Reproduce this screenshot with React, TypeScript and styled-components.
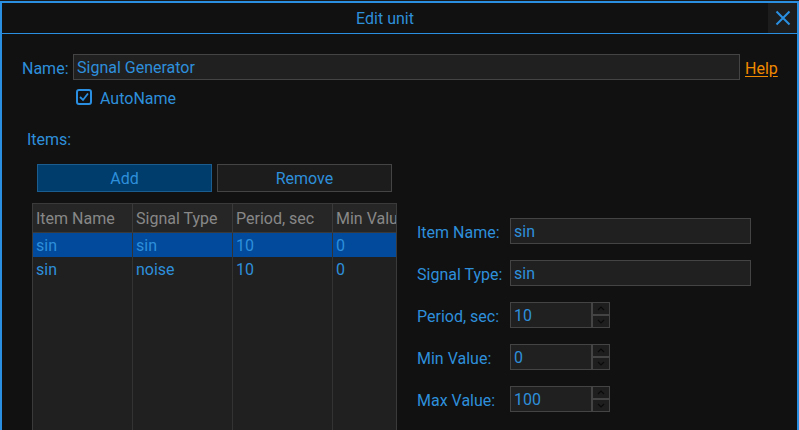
import React from "react";
import styled, { createGlobalStyle } from "styled-components";

const Global = createGlobalStyle`
  html, body { margin: 0; padding: 0; background: #1a1a1a; overflow: hidden; }
  body { font-family: Roboto, "Liberation Sans", sans-serif; }
`;

const BLUE = "#2e8fdb";

const Page = styled.div`
  width: 799px;
  height: 430px;
  padding-top: 1px;
  box-sizing: border-box;
  background: #1a1a1a;
  overflow: hidden;
`;

const Dialog = styled.div`
  width: 799px;
  height: 440px;
  box-sizing: border-box;
  border: 2px solid #2a8fe0;
  border-bottom: none;
  background: #111111;
  display: flex;
  flex-direction: column;
`;

const TitleBar = styled.div`
  height: 31px;
  flex: none;
  box-sizing: border-box;
  border-bottom: 1px solid #2a8fe0;
  display: flex;
  align-items: stretch;
  overflow: hidden;
`;

const Title = styled.div`
  flex: 1;
  box-sizing: border-box;
  text-align: center;
  padding-top: 1px;
  line-height: 29px;
  font-size: 16px;
  color: ${BLUE};
`;

const CloseButton = styled.div`
  width: 29px;
  background: #1d1d1d;
  display: flex;
  align-items: center;
  justify-content: center;
`;

const Content = styled.div`
  display: flex;
  flex-direction: column;
  padding: 20px 0 0 20px;
`;

const NameRow = styled.div`
  display: flex;
  align-items: center;
  height: 26px;
`;

const Label = styled.span<{ $w?: number }>`
  color: ${BLUE};
  font-size: 16px;
  padding-top: 2px;
  ${(p) => (p.$w ? `width: ${p.$w}px; flex: none;` : "")}
`;

const NameLabel = styled(Label)`
  width: 51px;
  flex: none;
`;

const TextBox = styled.div<{ $w: number }>`
  width: ${(p) => p.$w}px;
  height: 26px;
  box-sizing: border-box;
  border: 1px solid #444;
  background: #202020;
  color: ${BLUE};
  font-size: 16px;
  line-height: 26px;
  padding-left: 3px;
  flex: none;
`;

const HelpLink = styled.a`
  color: #f08a00;
  font-size: 16px;
  text-decoration: underline;
  text-underline-offset: 2px;
  margin-left: 5px;
  padding-top: 2px;
`;

const CheckRow = styled.div`
  display: flex;
  align-items: center;
  margin: 9px 0 0 54px;
  gap: 8px;
  height: 16px;
`;

const ItemsLabel = styled(Label)`
  margin: 24px 0 0 5px;
  line-height: 18px;
`;

const ButtonRow = styled.div`
  display: flex;
  gap: 5px;
  margin: 15px 0 0 15px;
`;

const Button = styled.div<{ $primary?: boolean }>`
  width: 175px;
  height: 28px;
  box-sizing: border-box;
  border: 1px solid ${(p) => (p.$primary ? "#1c5d8f" : "#444")};
  background: ${(p) => (p.$primary ? "#003c6c" : "#1c1c1c")};
  color: ${BLUE};
  font-size: 16px;
  display: flex;
  align-items: center;
  justify-content: center;
  padding-top: 1px;
`;

const Lower = styled.div`
  display: flex;
  margin: 11px 0 0 10px;
  gap: 20px;
`;

const Table = styled.div`
  width: 365px;
  height: 260px;
  box-sizing: border-box;
  border: 1px solid #3a3a3a;
  background: #202020;
  display: grid;
  grid-template-columns: 100px 100px 100px 63px;
  grid-template-rows: 29px 24px 24px 1fr;
  overflow: hidden;
  flex: none;
`;

const HeadCell = styled.div<{ $last?: boolean }>`
  background: #262626;
  border-right: ${(p) => (p.$last ? "none" : "1px solid #3a3a3a")};
  border-bottom: 1px solid #3a3a3a;
  color: #888;
  font-size: 16px;
  line-height: 30px;
  padding-left: 3px;
  white-space: nowrap;
  overflow: hidden;
`;

const Cell = styled.div<{ $sel?: boolean; $last?: boolean }>`
  background: ${(p) => (p.$sel ? "#014a9c" : "transparent")};
  border-right: ${(p) => (p.$last ? "none" : "1px solid #333")};
  color: ${BLUE};
  font-size: 16px;
  line-height: 26px;
  padding-left: 3px;
  white-space: nowrap;
  overflow: hidden;
`;

const Form = styled.div`
  display: flex;
  flex-direction: column;
  gap: 16px;
  padding-top: 15px;
`;

const FormRow = styled.div`
  display: flex;
  align-items: center;
  height: 26px;
`;

const Spin = styled.div`
  display: flex;
`;

const SpinButtons = styled.div`
  display: flex;
  flex-direction: column;
  height: 26px;
`;

const SpinButton = styled.div`
  width: 18px;
  height: 13px;
  box-sizing: border-box;
  border: 1px solid #444;
  background: #1e1e1e;
  display: flex;
  align-items: center;
  justify-content: center;
`;

const Chevron = ({ up }: { up?: boolean }) => (
  <svg width="8" height="5" viewBox="0 0 8 5">
    <path
      d={up ? "M1 4 L4 1 L7 4" : "M1 1 L4 4 L7 1"}
      fill="none"
      stroke="#0a0a0a"
      strokeWidth="1.2"
    />
  </svg>
);

const SpinBox = ({ value }: { value: string }) => (
  <Spin>
    <TextBox $w={82}>{value}</TextBox>
    <SpinButtons>
      <SpinButton>
        <Chevron up />
      </SpinButton>
      <SpinButton>
        <Chevron />
      </SpinButton>
    </SpinButtons>
  </Spin>
);

const rows = [
  ["sin", "sin", "10", "0"],
  ["sin", "noise", "10", "0"],
];

export default function App() {
  return (
    <Page>
      <Global />
      <Dialog>
        <TitleBar>
          <Title>Edit unit</Title>
          <CloseButton>
            <svg width="16" height="16" viewBox="0 0 16 16">
              <path d="M1.5 1.5 L14.5 14.5 M14.5 1.5 L1.5 14.5" stroke="#2a8fe0" strokeWidth="2" />
            </svg>
          </CloseButton>
        </TitleBar>
        <Content>
          <NameRow>
            <NameLabel>Name:</NameLabel>
            <TextBox $w={667}>Signal Generator</TextBox>
            <HelpLink>Help</HelpLink>
          </NameRow>
          <CheckRow>
            <svg width="16" height="16" viewBox="0 0 16 16">
              <rect x="1" y="1" width="14" height="14" rx="2" fill="none" stroke="#2a8fe0" strokeWidth="2" />
              <path d="M4 8 L7 11 L12 4.5" fill="none" stroke="#2a8fe0" strokeWidth="1.8" />
            </svg>
            <Label>AutoName</Label>
          </CheckRow>
          <ItemsLabel>Items:</ItemsLabel>
          <ButtonRow>
            <Button $primary>Add</Button>
            <Button>Remove</Button>
          </ButtonRow>
          <Lower>
            <Table>
              <HeadCell>Item Name</HeadCell>
              <HeadCell>Signal Type</HeadCell>
              <HeadCell>Period, sec</HeadCell>
              <HeadCell $last>Min Value</HeadCell>
              {rows.map((r, i) =>
                r.map((c, j) => (
                  <Cell key={`${i}-${j}`} $sel={i === 0} $last={j === 3}>
                    {c}
                  </Cell>
                ))
              )}
              <Cell />
              <Cell />
              <Cell />
              <Cell $last />
            </Table>
            <Form>
              <FormRow>
                <Label $w={93}>Item Name:</Label>
                <TextBox $w={241}>sin</TextBox>
              </FormRow>
              <FormRow>
                <Label $w={93}>Signal Type:</Label>
                <TextBox $w={241}>sin</TextBox>
              </FormRow>
              <FormRow>
                <Label $w={93}>Period, sec:</Label>
                <SpinBox value="10" />
              </FormRow>
              <FormRow>
                <Label $w={93}>Min Value:</Label>
                <SpinBox value="0" />
              </FormRow>
              <FormRow>
                <Label $w={93}>Max Value:</Label>
                <SpinBox value="100" />
              </FormRow>
            </Form>
          </Lower>
        </Content>
      </Dialog>
    </Page>
  );
}
